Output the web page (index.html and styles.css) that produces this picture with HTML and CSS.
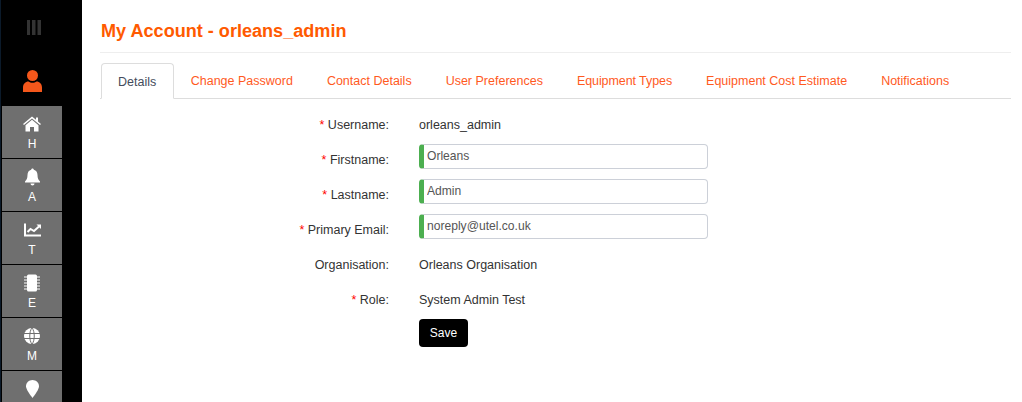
FILE: index.html
```html
<!DOCTYPE html>
<html lang="en">
<head>
<meta charset="utf-8">
<title>My Account</title>
<link rel="stylesheet" href="styles.css">
</head>
<body>
<div class="app">
  <nav class="sidebar">
    <div class="toggle">
      <svg width="14" height="15" viewBox="0 0 14 15"><path class="bars" d="M0 0h3v15H0zM5 0h3.500v15H5zM10.500 0H14v15h-3.500z"/></svg>
    </div>
    <div class="user">
      <svg width="19" height="22" viewBox="0 0 19 22"><circle class="ora" cx="9.500" cy="5.500" r="5.500"/><path class="ora" d="M0 22v-4.500C0 14 2.500 11.500 5.500 11.500c1 .8 2.500 1.300 4 1.300s3-.5 4-1.300c3 0 5.500 2.500 5.500 6V22z"/></svg>
    </div>
    <a class="item">
      <svg width="18" height="15" viewBox="0 0 18 15"><path class="w" d="M9 0 0 7.400l1 1.200L9 2l8 6.600 1-1.200-3-2.500V1h-2v2.300zM9 3.300 2.500 8.700V15h4.500v-4.500h4V15h4.500V8.700z"/></svg>
      <span>H</span>
    </a>
    <a class="item">
      <svg width="15" height="17" viewBox="0 0 15 17"><path class="w" d="M7.500 0C6.700 0 6.200.6 6.200 1.300 3.800 1.900 2.500 3.900 2.500 6.500c0 3.700-1 5-2.500 6.500v1h15v-1c-1.500-1.500-2.500-2.800-2.500-6.500 0-2.600-1.300-4.600-3.700-5.200C8.800.6 8.300 0 7.500 0zM5.500 15c0 1.100.9 2 2 2s2-.9 2-2z"/></svg>
      <span>A</span>
    </a>
    <a class="item">
      <svg width="17" height="13" viewBox="0 0 17 13"><path class="w" d="M0 0h2v11h15v2H0z"/><path class="line" d="M3.500 8.500 6.500 5.500 10 7.500 15 3"/><path class="w" d="M12.500 1H17v4.500z"/></svg>
      <span>T</span>
    </a>
    <a class="item">
      <svg width="16" height="17" viewBox="0 0 16 17"><rect class="w" x="3" y="0" width="10" height="17" rx="1.500"/><path class="pins" d="M0 2.500h3M0 5.500h3M0 8.500h3M0 11.500h3M0 14.500h3M13 2.500h3M13 5.500h3M13 8.500h3M13 11.500h3M13 14.500h3"/></svg>
      <span>E</span>
    </a>
    <a class="item">
      <svg width="16" height="16" viewBox="0 0 16 16"><circle class="w" cx="8" cy="8" r="8"/><path class="grid" d="M0 5.500h16M0 10.500h16M8 0C5 3 5 13 8 16M8 0c3 3 3 13 0 16"/></svg>
      <span>M</span>
    </a>
    <a class="item">
      <svg width="13" height="18" viewBox="0 0 13 18"><path class="w" d="M6.500 0C2.900 0 0 2.800 0 6.300 0 9.500 4.500 15.500 6.500 18 8.500 15.500 13 9.500 13 6.300 13 2.800 10.100 0 6.500 0z"/></svg>
    </a>
  </nav>
  <main class="main">
    <h1 class="title">My Account - orleans_admin</h1>
    <ul class="tabs">
      <li class="tab active">Details</li>
      <li class="tab">Change Password</li>
      <li class="tab">Contact Details</li>
      <li class="tab">User Preferences</li>
      <li class="tab tight">Equipment Types</li>
      <li class="tab">Equipment Cost Estimate</li>
      <li class="tab">Notifications</li>
    </ul>
    <form class="form">
      <div class="row first"><label class="lbl"><i>*</i> Username:</label><div class="val">orleans_admin</div></div>
      <div class="row"><label class="lbl low"><i>*</i> Firstname:</label><input class="field" value="Orleans"></div>
      <div class="row"><label class="lbl low"><i>*</i> Lastname:</label><input class="field" value="Admin"></div>
      <div class="row"><label class="lbl low"><i>*</i> Primary Email:</label><input class="field" value="noreply@utel.co.uk"></div>
      <div class="row tall"><label class="lbl">Organisation:</label><div class="val">Orleans Organisation</div></div>
      <div class="row"><label class="lbl"><i>*</i> Role:</label><div class="val">System Admin Test</div></div>
      <div class="actions"><button class="save" type="button">Save</button></div>
    </form>
  </main>
</div>
</body>
</html>
```

FILE: styles.css
```css
* { box-sizing: border-box; }
html, body {
  margin: 0;
  height: 100%;
  overflow: hidden;
  background: #fff;
}
body {
  font-family: "Liberation Sans", Arial, sans-serif;
  font-size: 12px;
  color: #333;
}
.app {
  display: flex;
  height: 402px;
}
.sidebar {
  width: 82px;
  flex: none;
  background: #000;
  overflow: hidden;
  border-left: 1px solid #0b1a2a;
  padding-left: 1px;
}
.toggle {
  width: 60px;
  height: 70px;
  padding: 20px 0 0 4px;
  display: flex;
  justify-content: center;
}
.user {
  width: 60px;
  height: 36px;
  display: flex;
  justify-content: center;
}
.item {
  width: 60px;
  height: 52px;
  margin-bottom: 1px;
  background: #6f6f6f;
  color: #fff;
  display: flex;
  flex-direction: column;
  align-items: center;
  font-size: 12px;
  padding-top: 9px;
}
.item svg { height: 18px; flex: none; }
.item span { line-height: 14px; margin-top: 4px; }
.bars { fill: #333; }
.ora { fill: #f4571b; }
.w { fill: #fff; }
.line { fill: none; stroke: #fff; stroke-width: 2; }
.pins { fill: none; stroke: #fff; stroke-width: 1; }
.grid { fill: none; stroke: #6f6f6f; stroke-width: 1; }
.main {
  width: 930px;
  padding-left: 18px;
}
.title {
  margin: 0;
  height: 53px;
  width: 911px;
  padding: 20px 0 0 1px;
  font-size: 18.080px;
  line-height: 22px;
  font-weight: bold;
  color: #ff5a00;
  border-bottom: 1px solid #eee;
}
.tabs {
  list-style: none;
  display: flex;
  margin: 10px 0 0;
  padding: 0 0 0 1px;
  width: 911px;
  height: 36px;
  border-bottom: 1px solid #ddd;
}
.tab {
  height: 36px;
  padding: 0 17px;
  line-height: 36px;
  font-size: 12.500px;
  color: #ff5a1e;
  white-space: nowrap;
}
.tab.tight { letter-spacing: -0.080px; }
.tab.active {
  padding: 0 16.500px 0 16px;
  color: #444c5c;
  background: #fff;
  border: 1px solid #ddd;
  border-bottom-color: #fff;
  border-radius: 4px 4px 0 0;
}
.form {
  padding-top: 17px;
}
.row {
  display: flex;
  align-items: flex-start;
  height: 35px;
}
.row.first { height: 28px; }
.row.tall { padding-top: 7px; height: 42px; }
.lbl {
  width: 289px;
  flex: none;
  text-align: right;
  font-size: 12.500px;
  line-height: 18px;
  color: #333;
}
.lbl.low { padding-top: 7px; }
.lbl i {
  font-style: normal;
  color: #f00;
}
.val {
  margin-left: 30px;
  font-size: 12.500px;
  line-height: 18px;
  color: #333;
}
.field {
  margin-left: 30px;
  width: 289px;
  height: 25px;
  padding: 0 6px 1px 3px;
  border: 1px solid #ccd0d8;
  border-left: 5px solid #4caf50;
  border-radius: 4px;
  outline: none;
  background: #fff;
  font-family: "Liberation Sans", Arial, sans-serif;
  font-size: 12.100px;
  color: #555;
}
.actions {
  padding-left: 319px;
  margin-top: -7px;
}
.save {
  display: block;
  width: 49px;
  height: 28px;
  padding: 0;
  border: 0;
  border-radius: 4px;
  background: #000;
  color: #fff;
  font-family: "Liberation Sans", Arial, sans-serif;
  font-size: 12px;
}
```
